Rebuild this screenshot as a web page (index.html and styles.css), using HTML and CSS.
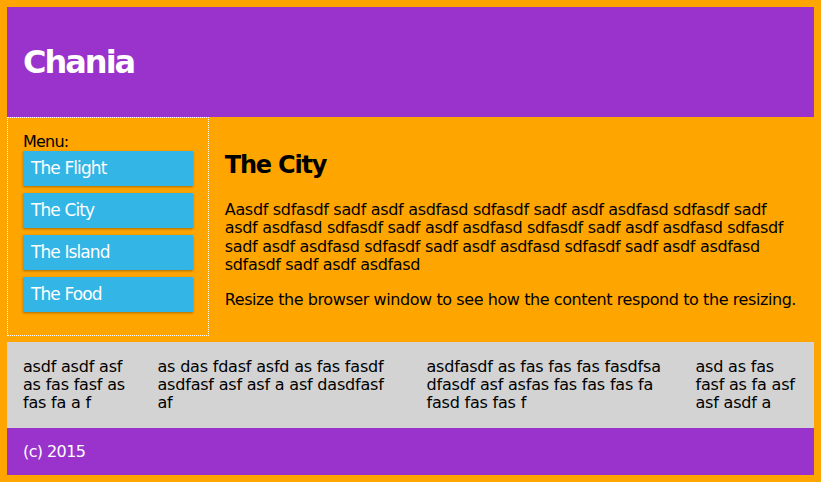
FILE: index.html
```html
<!DOCTYPE html>
<html lang="en">
<head>
<meta charset="utf-8">
<title>Chania</title>
<link rel="stylesheet" href="styles.css">
</head>
<body>
<div class="page">
  <header class="header">
    <h1 class="site-title">Chania</h1>
  </header>
  <div class="top-row">
    <nav class="menu">
      <div class="menu-label">Menu:</div>
      <ul class="menu-list">
        <li class="menu-item">The Flight</li>
        <li class="menu-item">The City</li>
        <li class="menu-item">The Island</li>
        <li class="menu-item">The Food</li>
      </ul>
    </nav>
    <main class="main">
      <h1 class="main-title">The City</h1>
      <p class="main-text">Aasdf sdfasdf sadf asdf asdfasd sdfasdf sadf asdf asdfasd sdfasdf sadf asdf asdfasd sdfasdf sadf asdf asdfasd sdfasdf sadf asdf asdfasd sdfasdf sadf asdf asdfasd sdfasdf sadf asdf asdfasd sdfasdf sadf asdf asdfasd sdfasdf sadf asdf asdfasd</p>
      <p class="main-text main-text-tight">Resize the browser window to see how the content respond to the resizing.</p>
    </main>
  </div>
  <section class="extra">
    <div class="extra-col">asdf asdf asf as fas fasf as fas fa a f</div>
    <div class="extra-col">as das fdasf asfd as fas fasdf asdfasf asf asf a asf dasdfasf af</div>
    <div class="extra-col">asdfasdf as fas fas fas fasdfsa dfasdf asf asfas fas fas fas fa fasd fas fas f</div>
    <div class="extra-col">asd as fas fasf as fa asf asf asdf a</div>
  </section>
  <footer class="footer">(c) 2015</footer>
</div>
</body>
</html>
```

FILE: styles.css
```css
* {
  box-sizing: border-box;
}

html, body {
  margin: 0;
  padding: 0;
}

body {
  background: #ffa500;
  font-family: "DejaVu Sans", sans-serif;
  font-size: 16px;
  color: #000;
}

.page {
  padding: 7px;
}

.header {
  height: 110px;
  background: #9933cc;
  color: #fff;
  padding: 0 16px;
  display: flex;
  align-items: center;
}

.site-title {
  margin: 0;
  font-size: 32px;
  font-weight: bold;
  letter-spacing: -2px;
  line-height: 37px;
}

.top-row {
  display: grid;
  grid-template-columns: 1fr 3fr;
  align-items: start;
}

.menu {
  height: 219px;
  border: 1px dotted #fff;
  padding: 15px;
}

.menu-label {
  line-height: 18.3px;
  letter-spacing: -0.8px;
}

.menu-list {
  list-style: none;
  margin: 0;
  padding: 0;
  display: flex;
  flex-direction: column;
  gap: 7px;
}

.menu-item {
  background: #33b5e5;
  color: #fff;
  height: 35px;
  padding: 8px 8px 0;
  font-size: 17px;
  line-height: 19px;
  letter-spacing: -0.9px;
  box-shadow: 0 1px 3px rgba(0, 0, 0, 0.12), 0 1px 2px rgba(0, 0, 0, 0.24);
}

.main {
  height: 225px;
  padding: 16px;
}

.main-title {
  margin: 18px 0 22px;
  font-size: 24px;
  line-height: 28px;
  letter-spacing: -1.2px;
}

.main-text {
  margin: 0 0 16px;
  line-height: 18.4px;
  letter-spacing: -0.32px;
}

.main-text-tight {
  letter-spacing: -0.42px;
  white-space: nowrap;
}

.extra {
  display: grid;
  grid-template-columns: 1fr 2fr 2fr 1fr;
  background: #d3d3d3;
  height: 86px;
}

.extra-col {
  padding: 16px;
  line-height: 18px;
  letter-spacing: -0.2px;
}

.footer {
  background: #9933cc;
  color: #fff;
  height: 47px;
  padding: 16px 16px 0;
  line-height: 15px;
  letter-spacing: -0.6px;
}
```
